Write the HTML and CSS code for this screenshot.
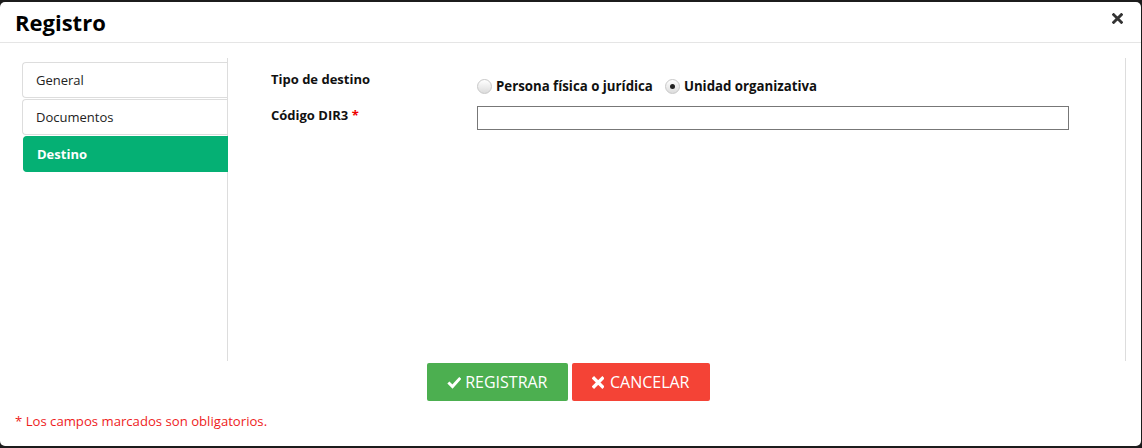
FILE: index.html
```html
<!DOCTYPE html>
<html lang="es">
<head>
    <meta charset="UTF-8">
    <title>Registro</title>
    <link rel="stylesheet" href="styles.css">
</head>
<body>

<div class="modal">
    <div class="modal-header">
        <h2>Registro</h2>
        <span class="close">
            <svg width="11" height="11" viewBox="0 0 10 10"><path d="M1.5 1.5 L8.5 8.5 M8.5 1.5 L1.5 8.5" stroke="#333" stroke-width="2.6" stroke-linecap="square"/></svg>
        </span>
    </div>

    <div class="modal-body">
        <!-- Pestañas -->
        <div class="tabs">
            <div class="tab">General</div>
            <div class="tab">Documentos</div>
            <div class="tab active">Destino</div>
        </div>

        <div class="tab-content">
            <div class="form-row">
                <label class="form-label">Tipo de destino</label>
                <div class="form-field radios">
                    <span class="radio"><span class="radio-circle"></span>Persona física o jurídica</span>
                    <span class="radio"><span class="radio-circle checked"></span>Unidad organizativa</span>
                </div>
            </div>
            <div class="form-row">
                <label class="form-label">Código DIR3 <span class="req">*</span></label>
                <div class="form-field">
                    <input type="text" class="text-input">
                </div>
            </div>
        </div>
    </div>

    <div class="buttons">
        <button class="btn btn-ok">
            <svg width="16" height="14" viewBox="0 0 16 14"><path d="M1.5 7.5 L6 12 L14.5 2.5" fill="none" stroke="#fff" stroke-width="3.2" stroke-linejoin="miter"/></svg>
            REGISTRAR
        </button>
        <button class="btn btn-cancel">
            <svg width="13" height="13" viewBox="0 0 12 12"><path d="M2 2 L10 10 M10 2 L2 10" stroke="#fff" stroke-width="3.2" stroke-linecap="square"/></svg>
            CANCELAR
        </button>
    </div>

    <div class="note">* Los campos marcados son obligatorios.</div>
</div>

</body>
</html>
```

FILE: styles.css
```css
/* Estilos base */
body {
    font-family: 'Open Sans', sans-serif;
    background-color: #1c1c1c;
    color: #222;
    margin: 0;
    padding: 0;
}

.modal {
    width: 1141px;
    height: 444px;
    margin-top: 2px;
    background-color: #fff;
    border-radius: 5px;
    display: flex;
    flex-direction: column;
}

.modal-header {
    height: 40px;
    border-bottom: 1px solid #e5e5e5;
    display: flex;
    align-items: center;
    justify-content: space-between;
    padding: 0 19px 0 15px;
}

.modal-header h2 {
    margin: 0;
    font-size: 22px;
    font-weight: bold;
    color: #000;
}

.close {
    display: flex;
    margin-top: -7px;
    margin-right: -1px;
}

.modal-body {
    display: flex;
    margin: 15px 15px 0 22px;
    height: 303px;
}

/* Pestañas */
.tabs {
    width: 205px;
    border-right: 1px solid #ddd;
    padding-top: 4px;
}

.tab {
    height: 34px;
    line-height: 34px;
    padding-left: 13px;
    font-size: 13px;
    color: #222;
    border: 1px solid #ddd;
    border-right: none;
    border-radius: 4px 0 0 4px;
    margin-bottom: 1px;
}

.tab.active {
    background-color: #05b074;
    border-color: #05b074;
    color: #fff;
    font-weight: bold;
    margin-top: 1px;
    margin-left: 1px;
    margin-right: -1px;
    padding-left: 13px;
}

.tab-content {
    flex: 1;
    border-right: 1px solid #ddd;
    padding: 11px 0 0 43px;
}

.form-row {
    display: flex;
    margin-bottom: 10px;
}

.form-label {
    width: 206px;
    font-size: 13px;
    font-weight: bold;
    color: #111;
    line-height: 20px;
}

.req {
    color: #e00;
}

.form-field {
    flex: 1;
}

.radios {
    display: flex;
    align-items: center;
    padding-top: 8px;
    height: 18px;
}

.radio {
    display: flex;
    align-items: center;
    font-size: 13.25px;
    font-weight: bold;
    color: #111;
    margin-right: 12px;
}

.radio-circle {
    width: 13px;
    height: 13px;
    border-radius: 50%;
    border: 1px solid #c8c8c8;
    background: linear-gradient(#fff, #dcdcdc);
    margin-right: 4px;
    position: relative;
}

.radio-circle.checked::after {
    content: '';
    position: absolute;
    left: 4px;
    top: 4px;
    width: 5px;
    height: 5px;
    border-radius: 50%;
    background-color: #222;
}

.text-input {
    width: 592px;
    height: 24px;
    box-sizing: border-box;
    border: 1px solid #777;
    margin: 1px 0 0;
    padding: 0 4px;
    font-family: 'Open Sans', sans-serif;
}

/* Botones */
.buttons {
    display: flex;
    justify-content: center;
    gap: 4px;
    margin-top: 2px;
    padding-right: 5px;
}

.btn {
    height: 38px;
    border: none;
    border-radius: 2px;
    color: #fff;
    font-family: 'Open Sans', sans-serif;
    font-size: 16px;
    display: flex;
    align-items: center;
    gap: 4px;
    padding: 0 20px;
}

.btn-ok {
    background-color: #4caf50;
    width: 141px;
}

.btn-cancel {
    background-color: #f44336;
    width: 138px;
    gap: 6px;
}

.note {
    margin: 11px 0 0 15px;
    font-size: 13.15px;
    color: #ee1c1c;
}
```
